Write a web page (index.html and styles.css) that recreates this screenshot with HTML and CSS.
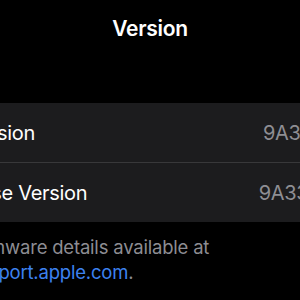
FILE: index.html
```html
<!DOCTYPE html>
<html>
<head>
<meta charset="utf-8">
<link rel="stylesheet" href="styles.css">
</head>
<body>
<div class="screen">
  <header class="nav"><h1 class="title">Version</h1></header>
  <div class="group">
    <div class="row"><span class="label">Version</span><span class="value">9A314</span></div>
    <div class="sep"></div>
    <div class="row"><span class="label">Case Version</span><span class="value">9A334</span></div>
  </div>
  <p class="footer">Firmware details available at<br><a class="link">support.apple.com</a>.</p>
</div>
</body>
</html>
```
FILE: styles.css
```css
html, body {
  margin: 0;
  padding: 0;
  background: #000;
  overflow: hidden;
}
.screen {
  width: 300px;
  height: 300px;
  overflow: hidden;
  font-family: Inter, "Noto Sans", sans-serif;
  color: #fff;
}
.nav {
  height: 103px;
  display: flex;
  justify-content: center;
}
.title {
  margin: 16px 0 0;
  font-size: 21px;
  line-height: 25px;
  font-weight: 600;
  letter-spacing: -0.3px;
}
.group {
  background: #1c1c1e;
  margin: 0 -37px 0 -50px;
}
.row {
  height: 59px;
  display: flex;
  align-items: center;
  justify-content: space-between;
  padding: 0 16px;
  font-size: 20px;
  letter-spacing: -0.3px;
}
.value {
  color: #8e8e93;
}
.sep {
  height: 1px;
  margin-left: 16px;
  background: #38383a;
}
.footer {
  margin: 13px 0 0 -33px;
  font-size: 18.5px;
  line-height: 25px;
  color: #8d8d93;
  letter-spacing: -0.2px;
}
.link {
  color: #3d82f0;
}
```
